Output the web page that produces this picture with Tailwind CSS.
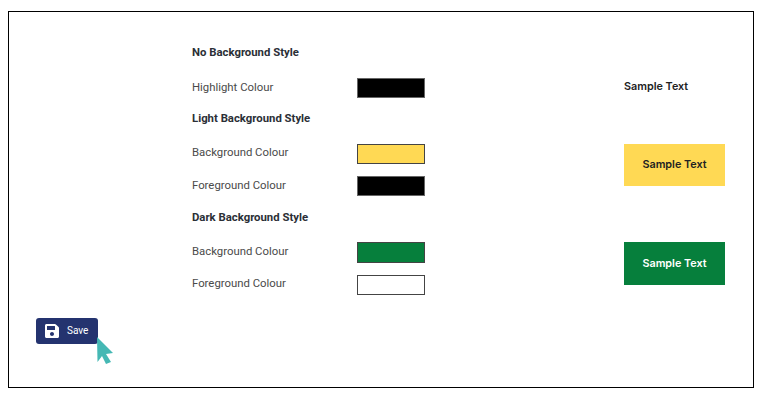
<!DOCTYPE html>
<html lang="en">
<head>
    <meta charset="UTF-8">
    <meta name="viewport" content="width=device-width, initial-scale=1.0">
    <title>Style Colours</title>
    <script src="https://cdn.jsdelivr.net/npm/@tailwindcss/browser@4"></script>
</head>
<body class="bg-white h-screen overflow-hidden font-['Roboto',sans-serif]">

<div class="relative ml-[8px] mt-[11px] w-[746px] h-[377px] border border-black">
    <div class="flex pt-[28px]">
        <!-- Colour settings -->
        <div class="w-[615px] pl-[183px] flex flex-col">
            <h2 class="h-[24px] pt-[2px] flex items-center text-[11.35px] font-bold text-[#2b2f36]">No Background Style</h2>
            <div class="mt-[14px] h-[20px] flex items-center">
                <span class="w-[165px] text-[11.35px] text-[#4a4a4a]">Highlight Colour</span>
                <span class="w-[68px] h-[20px] bg-black border border-[#666]"></span>
            </div>
            <h2 class="mt-[8px] h-[24px] pt-[2px] flex items-center text-[11.35px] font-bold text-[#2b2f36]">Light Background Style</h2>
            <div class="mt-[14px] h-[20px] flex items-center">
                <span class="w-[165px] pb-[2px] text-[11.35px] text-[#4a4a4a]">Background Colour</span>
                <span class="w-[68px] h-[20px] bg-[#ffd954] border border-[#444]"></span>
            </div>
            <div class="mt-[12px] h-[20px] flex items-center">
                <span class="w-[165px] text-[11.35px] text-[#4a4a4a]">Foreground Colour</span>
                <span class="w-[68px] h-[20px] bg-black border border-[#666]"></span>
            </div>
            <h2 class="mt-[9px] h-[24px] pt-[2px] flex items-center text-[11.35px] font-bold text-[#2b2f36]">Dark Background Style</h2>
            <div class="mt-[13px] h-[21px] flex items-center">
                <span class="w-[165px] pb-[2px] text-[11.35px] text-[#4a4a4a]">Background Colour</span>
                <span class="w-[68px] h-[21px] bg-[#067f3c] border border-[#444]"></span>
            </div>
            <div class="mt-[12px] h-[20px] flex items-center">
                <span class="w-[165px] pb-[2px] text-[11.35px] text-[#4a4a4a]">Foreground Colour</span>
                <span class="w-[68px] h-[20px] bg-white border border-[#444]"></span>
            </div>
        </div>
        <!-- Previews -->
        <div class="w-[101px] flex flex-col font-['Inter',sans-serif] text-[10.8px] font-semibold">
            <div class="mt-[37px] h-[20px] flex items-center text-[#222]">Sample Text</div>
            <div class="mt-[47px] h-[42px] flex items-center justify-center bg-[#ffd954] text-[#222]">Sample Text</div>
            <div class="mt-[56px] h-[43px] pt-[1px] flex items-center justify-center bg-[#067f3c] text-white">Sample Text</div>
        </div>
    </div>

    <button class="mt-[23px] ml-[27px] w-[62px] h-[26px] flex items-center gap-[8px] pl-[9px] rounded-[3px] bg-[#24336f] text-white text-[10px]">
        <svg class="w-[14px] h-[16px]" viewBox="0 0 448 512" fill="currentColor"><path d="M433.941 129.941l-83.882-83.882A48 48 0 0 0 316.118 32H48C21.49 32 0 53.49 0 80v352c0 26.51 21.49 48 48 48h352c26.51 0 48-21.49 48-48V163.882a48 48 0 0 0-14.059-33.941zM224 416c-35.346 0-64-28.654-64-64 0-35.346 28.654-64 64-64s64 28.654 64 64c0 35.346-28.654 64-64 64zm96-304.52V212c0 6.627-5.373 12-12 12H76c-6.627 0-12-5.373-12-12V108c0-6.627 5.373-12 12-12h228.52c3.183 0 6.235 1.264 8.485 3.515l3.48 3.48A11.996 11.996 0 0 1 320 111.48z"/></svg>
        <span class="pb-[2px]">Save</span>
    </button>

    <!-- Cursor -->
    <svg class="absolute left-[87px] top-[324px] w-[18px] h-[29px]" viewBox="0 0 18 29" fill="#45b8b4"><path d="M1 1L17 17L10 18L15 26L10 28L6 20L1.5 26Z"/></svg>
</div>

</body>
</html>
